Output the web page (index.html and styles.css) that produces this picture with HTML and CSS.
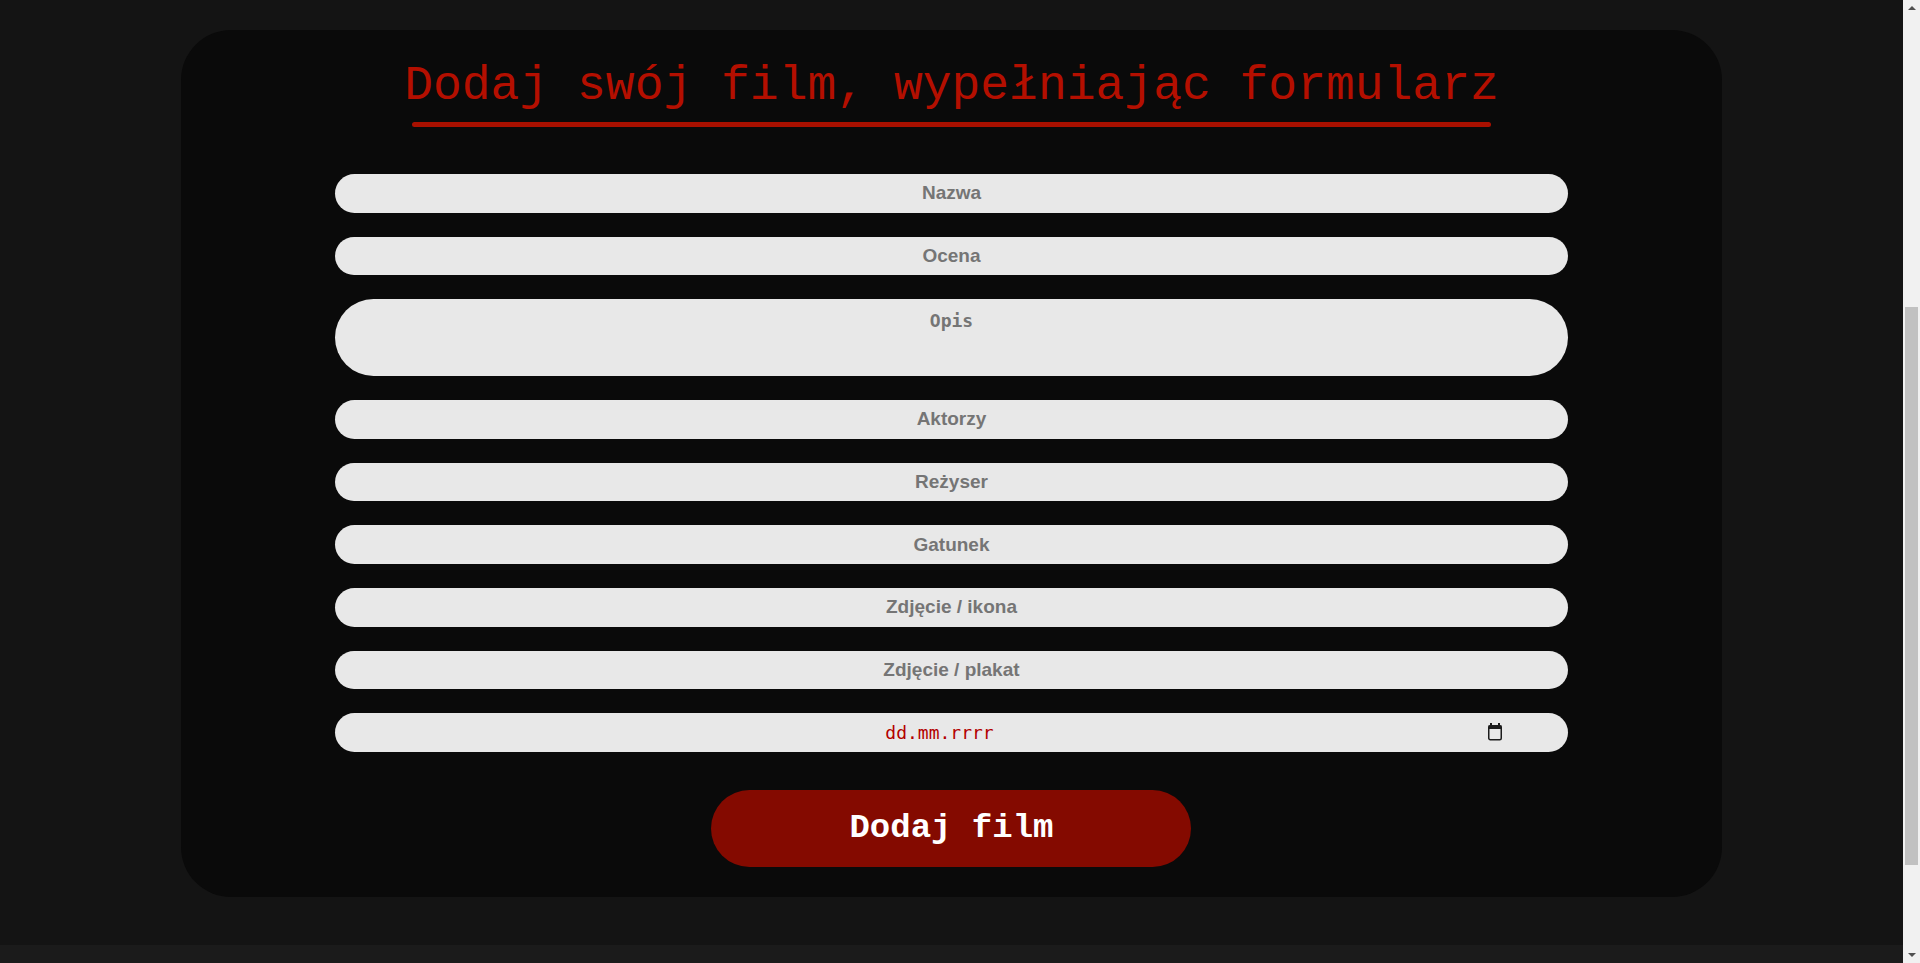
FILE: index.html
```html
<!DOCTYPE html>
<html lang="pl">
<head>
<meta charset="utf-8">
<title>Dodaj film</title>
<link rel="stylesheet" href="styles.css">
</head>
<body>
<header class="page-top"></header>
<main class="page-main">
  <section class="add-card">
    <h1 class="add-title">Dodaj swój film, wypełniając formularz</h1>
    <div class="title-line"></div>
    <form class="add-form" onsubmit="return false;">
      <input class="field" type="text" placeholder="Nazwa">
      <input class="field" type="text" placeholder="Ocena">
      <textarea class="field field-area" placeholder="Opis"></textarea>
      <input class="field" type="text" placeholder="Aktorzy">
      <input class="field" type="text" placeholder="Reżyser">
      <input class="field" type="text" placeholder="Gatunek">
      <input class="field" type="text" placeholder="Zdjęcie / ikona">
      <input class="field" type="text" placeholder="Zdjęcie / plakat">
      <div class="date-wrap">
        <input class="field field-date" type="text" placeholder="dd.mm.rrrr">
        <svg class="date-icon" width="16" height="18" viewBox="0 0 16 18" aria-hidden="true">
          <rect x="3" y="0" width="2" height="3" fill="#1c1c1c"/>
          <rect x="11" y="0" width="2" height="3" fill="#1c1c1c"/>
          <rect x="1.75" y="2.75" width="12.5" height="14" rx="1.5" fill="none" stroke="#1c1c1c" stroke-width="1.5"/>
          <rect x="1.5" y="2.5" width="13" height="3.5" fill="#1c1c1c"/>
        </svg>
      </div>
      <button class="add-btn" type="submit">Dodaj film</button>
    </form>
  </section>
</main>
<footer class="page-footer"></footer>
<div class="fake-scrollbar" aria-hidden="true">
  <span class="sb-arrow sb-up"></span>
  <span class="sb-thumb"></span>
  <span class="sb-arrow sb-down"></span>
</div>
<script src="scroll.js"></script>
</body>
</html>
```
FILE: styles.css
```css
* { box-sizing: border-box; }

html, body {
  margin: 0;
  padding: 0;
}

html {
  background: #141414;
}

body {
  background: #141414;
  margin-right: 17px;
  font-family: "Liberation Sans", Arial, sans-serif;
}

.page-top {
  height: 500px;
}

.page-main {
  padding-top: 30px;
}

.add-card {
  width: 81%;
  margin: 0 auto;
  background: #0a0a0a;
  border-radius: 50px;
  padding: 29px 0 30px;
  display: flex;
  flex-direction: column;
  align-items: center;
}

.add-title {
  margin: 0;
  font-family: "Liberation Mono", "Courier New", monospace;
  font-size: 48px;
  font-weight: normal;
  line-height: normal;
  color: #b40f00;
  text-align: center;
}

.title-line {
  width: 70%;
  height: 5px;
  margin-top: 9px;
  border-radius: 3px;
  background: #a81000;
}

.add-form {
  width: 80%;
  margin-top: 47px;
  display: flex;
  flex-direction: column;
  align-items: center;
  gap: 24px;
}

.field {
  display: block;
  width: 100%;
  height: 38.6px;
  border: none;
  outline: none;
  border-radius: 50px;
  background: #e8e8e8;
  color: #b00000;
  font-family: "Liberation Sans", Arial, sans-serif;
  font-size: 19px;
  font-weight: bold;
  text-align: center;
  padding: 0 20px;
  margin: 0;
}

.field::placeholder {
  color: #757575;
  opacity: 1;
}

.field-area {
  height: 77px;
  resize: none;
  padding: 11px 40px 0;
  font-family: "DejaVu Sans Mono", monospace;
  font-size: 18px;
}

.date-wrap {
  position: relative;
  width: 100%;
}

.field-date {
  font-family: "DejaVu Sans Mono", monospace;
  font-size: 18px;
  font-weight: normal;
  padding: 0 24px 0 0;
}

.field-date::placeholder {
  color: #b30000;
}

.date-icon {
  position: absolute;
  right: 65px;
  top: 10px;
}

.add-btn {
  margin-top: 14px;
  width: 480px;
  height: 77px;
  border: none;
  border-radius: 50px;
  background: #840a00;
  color: #ffffff;
  font-family: "Liberation Mono", "Courier New", monospace;
  font-size: 34px;
  font-weight: bold;
  cursor: pointer;
}

.page-footer {
  margin-top: 48px;
  height: 158px;
  background: #1b1b1b;
}

.fake-scrollbar {
  position: fixed;
  top: 0;
  right: 0;
  width: 17px;
  height: 100vh;
  background: #f1f1f1;
}

.sb-thumb {
  position: absolute;
  left: 2px;
  right: 2px;
  top: 307px;
  height: 558px;
  background: #c1c1c1;
}

.sb-arrow {
  position: absolute;
  left: 5px;
  width: 0;
  height: 0;
  border-left: 4px solid transparent;
  border-right: 4px solid transparent;
}

.sb-up {
  top: 6px;
  border-bottom: 4px solid #505050;
}

.sb-down {
  bottom: 6px;
  border-top: 4px solid #505050;
}
```
FILE: scroll.js
```js
window.scrollTo(0, 500);
window.addEventListener('load', function () {
  window.scrollTo(0, 500);
});
```
